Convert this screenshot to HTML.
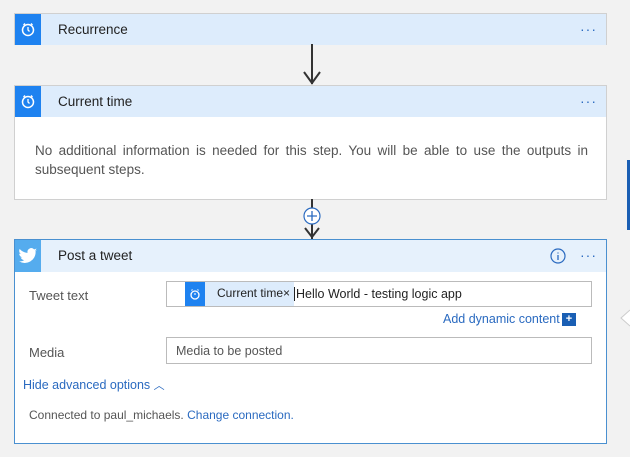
<!DOCTYPE html><html><head><style>
body{margin:0;width:630px;height:457px;background:#f2f2f2;font-family:"Liberation Sans",sans-serif;position:relative;overflow:hidden;font-size:13px;color:#222}
.card{position:absolute;left:14px;width:593px;background:#fff;border:1px solid #d0d0d0;box-sizing:border-box}
.hd{height:31px;background:#ddecfc;position:relative}
.ic{position:absolute;left:0;top:0;width:26px;height:100%;background:#1e82f0}
.tt{position:absolute;left:43px;top:8px;font-size:13.5px;color:#222}
.dots{position:absolute;right:9px;top:9px;color:#2a6ac0;font-size:14px;letter-spacing:1px;line-height:12px}
.line{position:absolute;left:311px;width:2px;background:#333}
.abs{position:absolute}
.inp{position:absolute;left:151px;width:426px;height:26px;border:1px solid #bbb;box-sizing:border-box;background:#fff}
</style></head><body>
<div class="card" style="top:13px;height:32px"><div class="hd"><div class="ic"><svg width="26" height="31"><circle cx="13" cy="16" r="5.5" fill="none" stroke="#fff" stroke-width="1.5"/><path d="M13 13v3l1.5 1.5M8.5 11l1.5-1.5M17.5 11l-1.5-1.5" stroke="#fff" stroke-width="1.3" fill="none"/></svg></div><div class="tt">Recurrence</div><div class="dots">···</div></div></div>
<div class="line" style="top:44px;height:40px"></div>
<svg class="abs" style="left:302px;top:70px" width="20" height="16"><path d="M2 2l8 11 8-11" stroke="#333" stroke-width="2" fill="none"/></svg>
<div class="card" style="top:85px;height:115px"><div class="hd"><div class="ic"><svg width="26" height="31"><circle cx="13" cy="16" r="5.5" fill="none" stroke="#fff" stroke-width="1.5"/><path d="M13 13v3l1.5 1.5M8.5 11l1.5-1.5M17.5 11l-1.5-1.5" stroke="#fff" stroke-width="1.3" fill="none"/></svg></div><div class="tt">Current time</div><div class="dots">···</div></div>
<div style="position:absolute;left:20px;top:55px;width:553px;font-size:13.5px;color:#555;line-height:19px;text-align:justify;text-align-last:left">No additional information is needed for this step. You will be able to use the outputs in subsequent steps.</div></div>
<div class="line" style="top:199px;height:40px"></div>
<svg class="abs" style="left:302px;top:206px" width="20" height="34"><path d="M3 22l7 9 7-9" stroke="#333" stroke-width="2" fill="none"/><circle cx="10" cy="10" r="8" fill="#fff" stroke="#2a6ac0" stroke-width="1.2"/><path d="M10 5v10M5 10h10" stroke="#2a6ac0" stroke-width="1.3"/></svg>
<div class="card" style="top:239px;left:14px;width:593px;height:205px;border:1.5px solid #4a90d0"><div class="hd" style="height:32px;background:#e6f1fc"><div class="ic" style="background:#55acee"><svg width="26" height="32"><path d="M22 10c-.7.3-1.4.5-2.2.6.8-.5 1.4-1.2 1.7-2.1-.7.4-1.6.8-2.4.9a3.8 3.8 0 0 0-6.5 3.5c-3.2-.2-6-1.700-7.9-4-1 1.8-.5 4 1.2 5.1-.6 0-1.2-.2-1.7-.5 0 1.9 1.3 3.5 3.1 3.8-.6.2-1.2.2-1.7.1.5 1.5 2 2.600 3.600 2.700A7.7 7.7 0 0 1 4 21.3 10.8 10.8 0 0 0 20.6 11.7V11c.6-.3 1-.7 1.4-1z" fill="#fff"/></svg></div><div class="tt">Post a tweet</div>
<svg class="abs" style="right:40px;top:8px" width="16" height="16"><circle cx="8" cy="8" r="7" fill="none" stroke="#2a6ac0" stroke-width="1.2"/><path d="M8 7v5M8 4.5v1" stroke="#2a6ac0" stroke-width="1.3"/></svg><div class="dots">···</div></div>
<div class="abs" style="left:14px;top:48px;color:#555">Tweet text</div>
<div class="inp" style="top:41px"><div class="abs" style="left:18px;top:0;width:20px;height:24px;background:#1e82f0"><svg width="20" height="24"><circle cx="10" cy="13" r="4" fill="none" stroke="#fff" stroke-width="1.3"/><path d="M6.5 8.5l1-1M13.5 8.5l-1-1M10 11v2" stroke="#fff" stroke-width="1.1"/></svg></div><div class="abs" style="left:38px;top:0;width:89px;height:24px;background:#ddecfc;font-size:12px;line-height:22px;padding-left:12px;box-sizing:border-box">Current time×</div><div class="abs" style="left:127px;top:5px;border-left:1px solid #222;padding-left:1px;font-size:12.5px">Hello World - testing logic app</div></div>
<div class="abs" style="left:428px;top:72px;color:#2a6ac0;font-size:12.5px">Add dynamic content</div>
<div class="abs" style="left:547px;top:73px;width:14px;height:13px;background:#1a5fb4;color:#fff;font-size:11px;line-height:13px;text-align:center;font-weight:bold">+</div>
<div class="abs" style="left:14px;top:105px;color:#555">Media</div>
<div class="inp" style="top:97px;height:27px"><div class="abs" style="left:9px;top:6px;color:#555;font-size:12.5px">Media to be posted</div></div>
<div class="abs" style="left:8px;top:137px;color:#2a6ac0;font-size:12.5px">Hide advanced options <span style="font-size:11px">︿</span></div>
<div class="abs" style="left:14px;top:168px;color:#555;font-size:12px">Connected to paul_michaels. <span style="color:#2a6ac0">Change connection.</span></div>
</div>
<div class="abs" style="left:627px;top:160px;width:3px;height:70px;background:#1a5fb4"></div>
<svg class="abs" style="left:618px;top:308px" width="12" height="20"><path d="M12 2L3 10l9 8" fill="#fff" stroke="#ccc"/></svg>
</body></html>
